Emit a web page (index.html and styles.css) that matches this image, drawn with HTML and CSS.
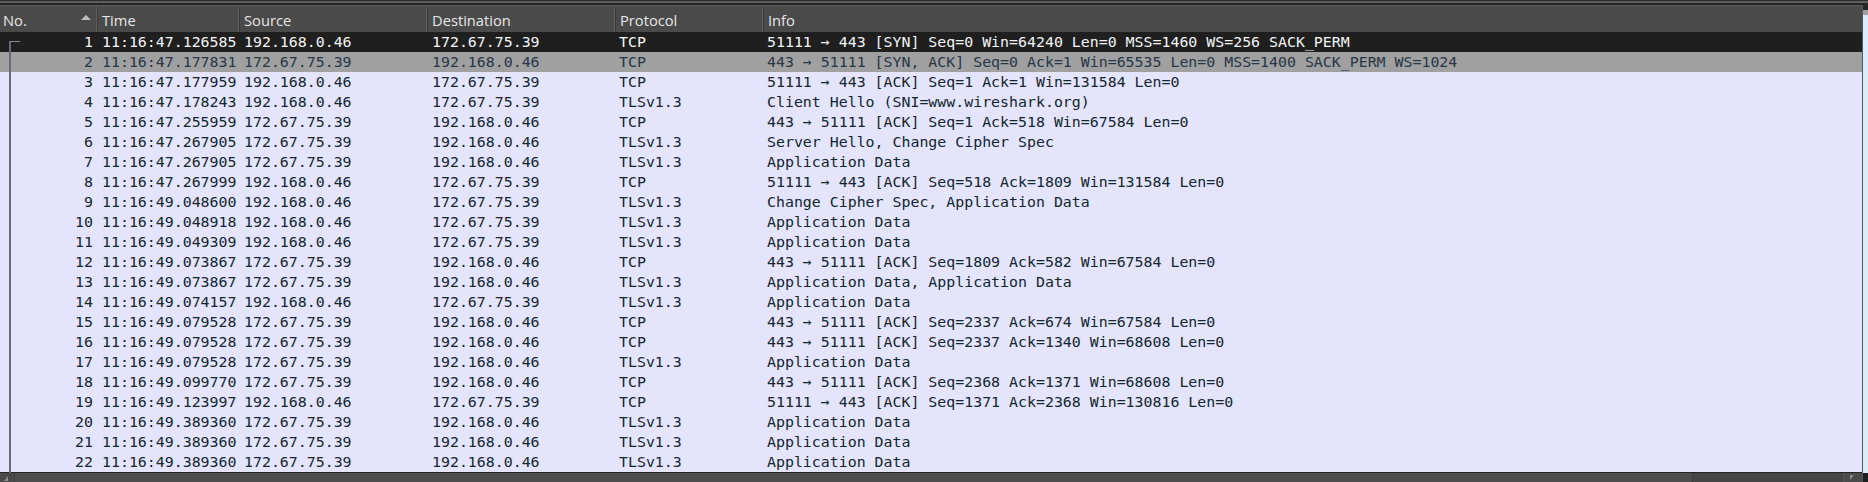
FILE: index.html
```html
<!DOCTYPE html>
<html>
<head>
<meta charset="utf-8">
<link rel="stylesheet" href="styles.css">
</head>
<body>
<div class="app">
  <div class="topbar"></div>
  <div class="main">
    <div class="list">
      <div class="header row-grid">
        <div class="hcell first">No.<span class="sort"></span></div>
        <div class="hcell">Time</div>
        <div class="hcell">Source</div>
        <div class="hcell">Destination</div>
        <div class="hcell">Protocol</div>
        <div class="hcell">Info</div>
      </div>
      <div class="rows">
        <div class="tree"></div>
        <div class="row row-grid selected"><span class="num">1</span><span>11:16:47.126585</span><span>192.168.0.46</span><span>172.67.75.39</span><span>TCP</span><span>51111 → 443 [SYN] Seq=0 Win=64240 Len=0 MSS=1460 WS=256 SACK_PERM</span></div>
        <div class="row row-grid related"><span class="num">2</span><span>11:16:47.177831</span><span>172.67.75.39</span><span>192.168.0.46</span><span>TCP</span><span>443 → 51111 [SYN, ACK] Seq=0 Ack=1 Win=65535 Len=0 MSS=1400 SACK_PERM WS=1024</span></div>
        <div class="row row-grid"><span class="num">3</span><span>11:16:47.177959</span><span>192.168.0.46</span><span>172.67.75.39</span><span>TCP</span><span>51111 → 443 [ACK] Seq=1 Ack=1 Win=131584 Len=0</span></div>
        <div class="row row-grid"><span class="num">4</span><span>11:16:47.178243</span><span>192.168.0.46</span><span>172.67.75.39</span><span>TLSv1.3</span><span>Client Hello (SNI=www.wireshark.org)</span></div>
        <div class="row row-grid"><span class="num">5</span><span>11:16:47.255959</span><span>172.67.75.39</span><span>192.168.0.46</span><span>TCP</span><span>443 → 51111 [ACK] Seq=1 Ack=518 Win=67584 Len=0</span></div>
        <div class="row row-grid"><span class="num">6</span><span>11:16:47.267905</span><span>172.67.75.39</span><span>192.168.0.46</span><span>TLSv1.3</span><span>Server Hello, Change Cipher Spec</span></div>
        <div class="row row-grid"><span class="num">7</span><span>11:16:47.267905</span><span>172.67.75.39</span><span>192.168.0.46</span><span>TLSv1.3</span><span>Application Data</span></div>
        <div class="row row-grid"><span class="num">8</span><span>11:16:47.267999</span><span>192.168.0.46</span><span>172.67.75.39</span><span>TCP</span><span>51111 → 443 [ACK] Seq=518 Ack=1809 Win=131584 Len=0</span></div>
        <div class="row row-grid"><span class="num">9</span><span>11:16:49.048600</span><span>192.168.0.46</span><span>172.67.75.39</span><span>TLSv1.3</span><span>Change Cipher Spec, Application Data</span></div>
        <div class="row row-grid"><span class="num">10</span><span>11:16:49.048918</span><span>192.168.0.46</span><span>172.67.75.39</span><span>TLSv1.3</span><span>Application Data</span></div>
        <div class="row row-grid"><span class="num">11</span><span>11:16:49.049309</span><span>192.168.0.46</span><span>172.67.75.39</span><span>TLSv1.3</span><span>Application Data</span></div>
        <div class="row row-grid"><span class="num">12</span><span>11:16:49.073867</span><span>172.67.75.39</span><span>192.168.0.46</span><span>TCP</span><span>443 → 51111 [ACK] Seq=1809 Ack=582 Win=67584 Len=0</span></div>
        <div class="row row-grid"><span class="num">13</span><span>11:16:49.073867</span><span>172.67.75.39</span><span>192.168.0.46</span><span>TLSv1.3</span><span>Application Data, Application Data</span></div>
        <div class="row row-grid"><span class="num">14</span><span>11:16:49.074157</span><span>192.168.0.46</span><span>172.67.75.39</span><span>TLSv1.3</span><span>Application Data</span></div>
        <div class="row row-grid"><span class="num">15</span><span>11:16:49.079528</span><span>172.67.75.39</span><span>192.168.0.46</span><span>TCP</span><span>443 → 51111 [ACK] Seq=2337 Ack=674 Win=67584 Len=0</span></div>
        <div class="row row-grid"><span class="num">16</span><span>11:16:49.079528</span><span>172.67.75.39</span><span>192.168.0.46</span><span>TCP</span><span>443 → 51111 [ACK] Seq=2337 Ack=1340 Win=68608 Len=0</span></div>
        <div class="row row-grid"><span class="num">17</span><span>11:16:49.079528</span><span>172.67.75.39</span><span>192.168.0.46</span><span>TLSv1.3</span><span>Application Data</span></div>
        <div class="row row-grid"><span class="num">18</span><span>11:16:49.099770</span><span>172.67.75.39</span><span>192.168.0.46</span><span>TCP</span><span>443 → 51111 [ACK] Seq=2368 Ack=1371 Win=68608 Len=0</span></div>
        <div class="row row-grid"><span class="num">19</span><span>11:16:49.123997</span><span>192.168.0.46</span><span>172.67.75.39</span><span>TCP</span><span>51111 → 443 [ACK] Seq=1371 Ack=2368 Win=130816 Len=0</span></div>
        <div class="row row-grid"><span class="num">20</span><span>11:16:49.389360</span><span>172.67.75.39</span><span>192.168.0.46</span><span>TLSv1.3</span><span>Application Data</span></div>
        <div class="row row-grid"><span class="num">21</span><span>11:16:49.389360</span><span>172.67.75.39</span><span>192.168.0.46</span><span>TLSv1.3</span><span>Application Data</span></div>
        <div class="row row-grid"><span class="num">22</span><span>11:16:49.389360</span><span>172.67.75.39</span><span>192.168.0.46</span><span>TLSv1.3</span><span>Application Data</span></div>
      </div>
      <div class="hscroll">
        <div class="sbtn left"><span class="arr-l"></span></div>
        <div class="handle"></div>
        <div class="track"></div>
        <div class="sbtn right"><span class="arr-r"></span></div>
      </div>
    </div>
    <div class="side">
      <div class="side-top"></div>
      <div class="side-gray"></div>
      <div class="side-body"></div>
      <div class="side-bottom"></div>
    </div>
  </div>
</div>
</body>
</html>
```

FILE: styles.css
```css
html, body {
  margin: 0;
  padding: 0;
  background: #1e1e1e;
}
.app {
  width: 1868px;
  height: 482px;
  display: flex;
  flex-direction: column;
  overflow: hidden;
}
.topbar {
  height: 2px;
  border-top: 1px solid #2a2a2a;
  border-bottom: 2px solid #262626;
  background: #5e5e5e;
  flex: none;
}
.main {
  flex: 1;
  display: flex;
  min-height: 0;
}
.list {
  width: 1862px;
  display: flex;
  flex-direction: column;
  background: #e4e4fc;
  border-right: 1px solid #55575f;
}
.row-grid {
  display: grid;
  grid-template-columns: 96px 142px 188px 188px 148px 1fr;
}
.header {
  height: 26px;
  background: #4a4a4a;
  border-top: 1px solid #5a5a5a;
  flex: none;
}
.hcell {
  position: relative;
  font-family: "Open Sans", "Noto Sans", sans-serif;
  font-size: 14.7px;
  color: #e6e6e6;
  line-height: 28px;
  padding-left: 5px;
  border-left: 1px solid #5e5e5e;
  box-shadow: inset 1px 0 0 #3c3c3c;
  white-space: nowrap;
}
.hcell.first {
  border-left: none;
  box-shadow: none;
  padding-left: 3px;
}
.sort {
  position: absolute;
  left: 81px;
  top: 9px;
  width: 0;
  height: 0;
  border-left: 5px solid transparent;
  border-right: 5px solid transparent;
  border-bottom: 5px solid #bdbdbd;
}
.rows {
  position: relative;
  height: 440px;
  flex: none;
}
.row {
  height: 20px;
  line-height: 20px;
  font-family: "DejaVu Sans Mono", "Liberation Mono", monospace;
  font-size: 14.9px;
  color: #12272e;
  white-space: nowrap;
}
.row span {
  padding-left: 6px;
  overflow: hidden;
}
.row span.num {
  text-align: right;
  padding-left: 0;
  padding-right: 3px;
}
.row span:nth-child(5),
.row span:nth-child(6) {
  padding-left: 5px;
}
.row.selected {
  background: #1f1f1f;
  color: #f4f4f4;
}
.row.related {
  background: #a0a0a0;
  color: #283646;
}
.tree {
  position: absolute;
  left: 9px;
  top: 9px;
  width: 9px;
  height: 440px;
  border-left: 2px solid #6a6a78;
  border-top: 1px solid #8a8a8a;
}
.hscroll {
  flex: 1;
  display: flex;
  border-top: 1px solid #232323;
  background: #404040;
}
.sbtn {
  width: 14px;
  background: #4a4a4a;
  position: relative;
}
.sbtn.right {
  width: 18px;
  margin-left: 1px;
  border-left: 1px solid #555;
}
.arr-l {
  position: absolute;
  left: 4px;
  top: 3px;
  border-top: 5px solid transparent;
  border-right: 4px solid #8a8a8a;
}
.arr-r {
  position: absolute;
  left: 6px;
  top: 2px;
  border-bottom: 5px solid transparent;
  border-left: 4px solid #8a8a8a;
}
.handle {
  width: 1677px;
  margin-left: 1px;
  background: #4d4d4d;
  border-right: 1px solid #3a3a3a;
}
.track {
  flex: 1;
  background: #454545;
}
.side {
  flex: 1;
  display: flex;
  flex-direction: column;
}
.side-top {
  height: 5px;
  background: #262626;
}
.side-gray {
  height: 5px;
  background: #a0a0a0;
}
.side-body {
  flex: 1;
  background: #dcebfc;
}
.side-bottom {
  height: 9px;
  background: #1e1e1e;
}
```
